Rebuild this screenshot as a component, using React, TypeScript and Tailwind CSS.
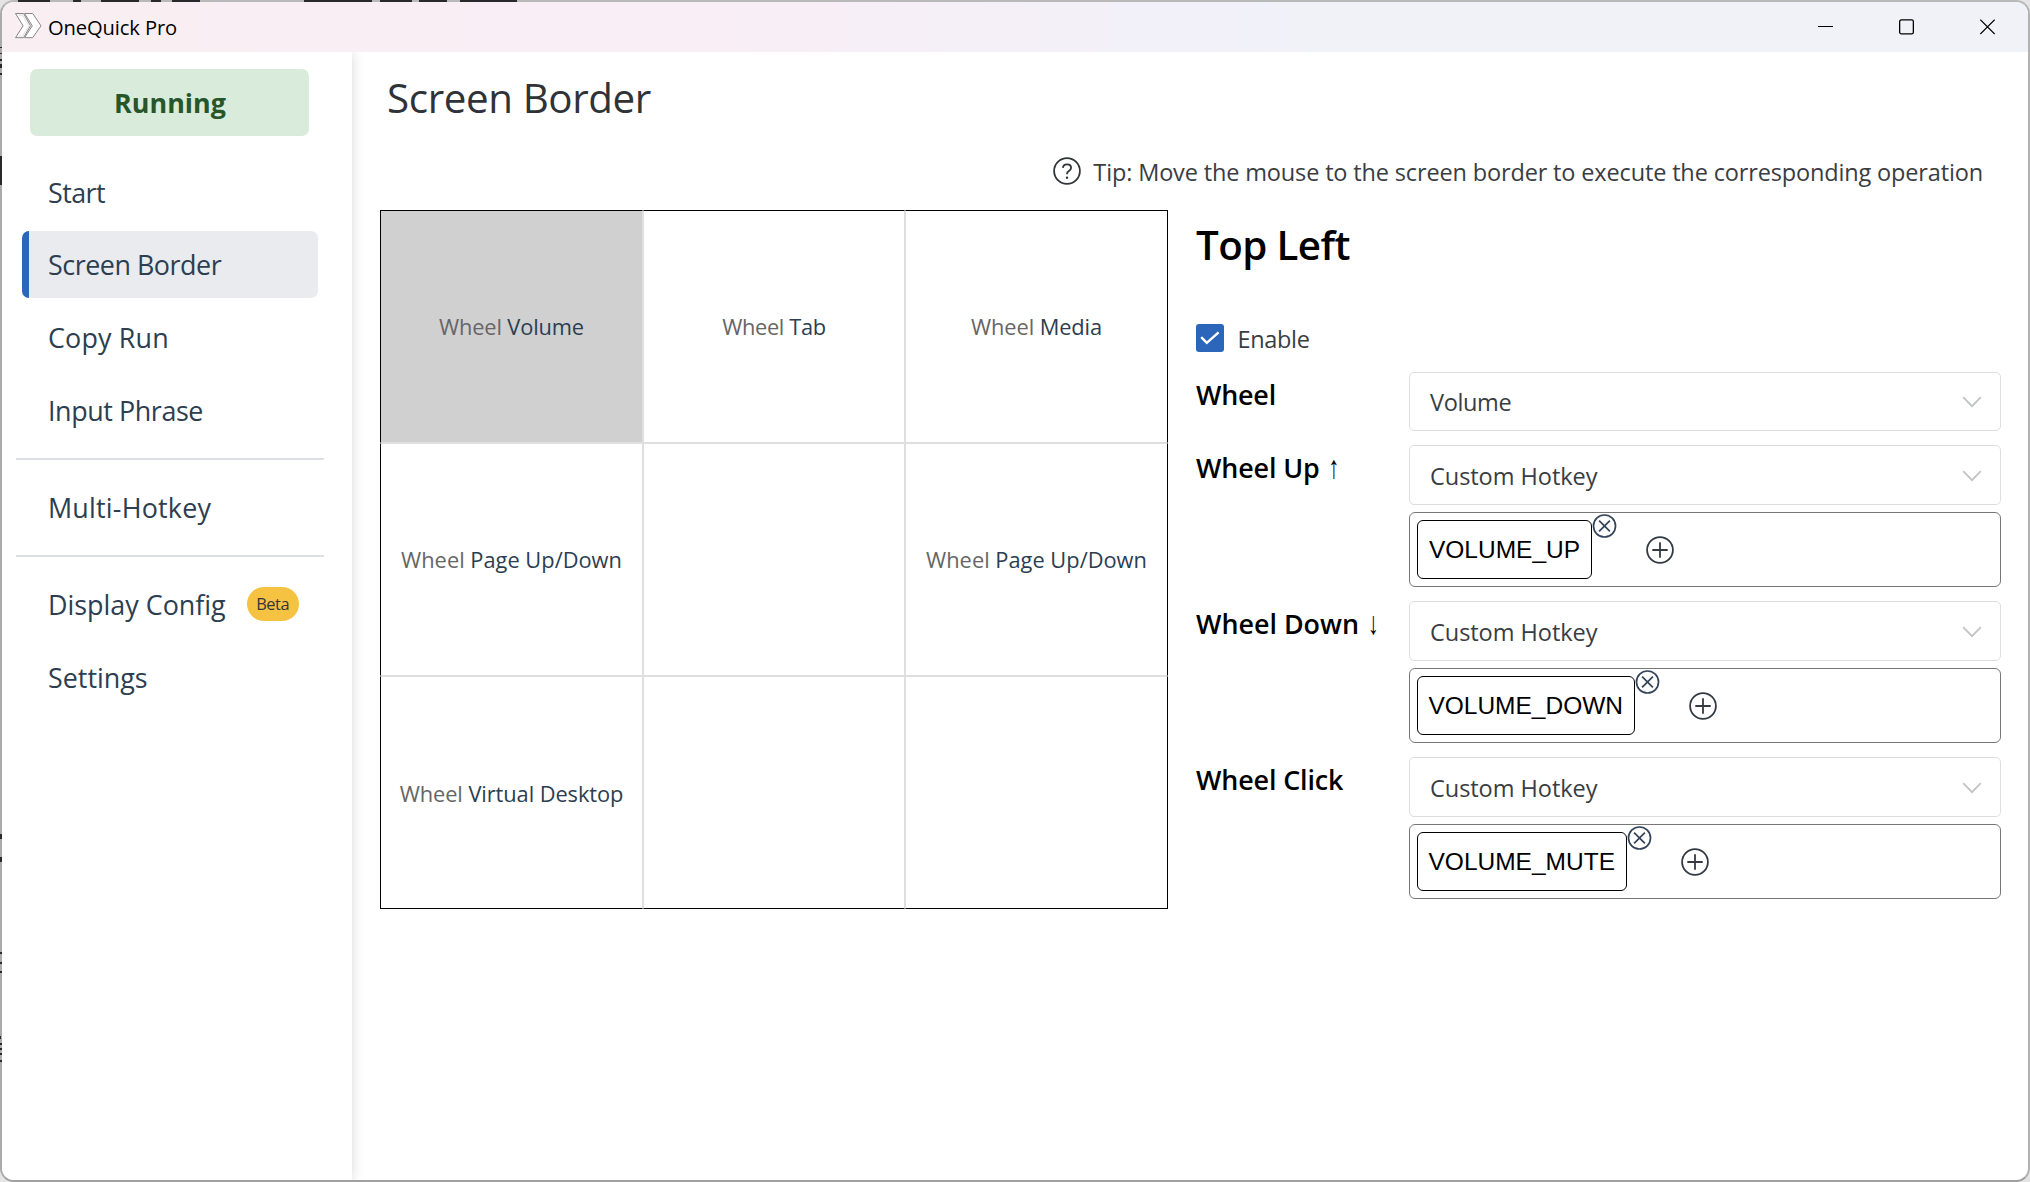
import type { ReactNode } from "react";

function Logo() {
  return (
    <svg width="28" height="28" viewBox="0 0 28 28" fill="#fff" stroke="#8a8588" strokeWidth="1">
      <path d="M1.5 1.5h8l7 12.3-7 11.9h-8l7.6-11.9z" />
      <path d="M10.5 1.5h8.2l8.3 12.3-8.3 11.9h-8.2l7.8-11.9z" />
      <path d="M5 3.2h3.6l6.2 10.6-6.2 10.2H5" fill="none" stroke="#c9c5c7" strokeWidth="0.6" />
    </svg>
  );
}

function TitleBar() {
  return (
    <header className="flex h-[50px] shrink-0 items-center bg-[linear-gradient(90deg,#f9eff2_0%,#f9eef4_22%,#f8eef6_38%,#f2f1f9_58%,#f1f2f8_75%,#f1f2f8_100%)] pl-3 pr-[33px]">
      <div className="-mt-0.5">
        <Logo />
      </div>
      <span className="ml-1.5 text-[20.16px] leading-[50px] tracking-[-0.12px] text-black">OneQuick Pro</span>
      <div className="ml-auto flex items-center gap-[66px]">
        <svg width="15" height="16" viewBox="0 0 15 16" stroke="#000" strokeWidth="1">
          <path d="M0 7.5h15" />
        </svg>
        <svg width="15" height="16" viewBox="0 0 15 16" fill="none" stroke="#000" strokeWidth="1.3">
          <rect x="0.65" y="0.95" width="13.7" height="13.9" rx="1.6" />
        </svg>
        <svg width="15" height="16" viewBox="0 0 15 16" stroke="#000" strokeWidth="1.2">
          <path d="M0.3 0.6l14.4 14.4M14.7 0.6L0.3 15" />
        </svg>
      </div>
    </header>
  );
}

function NavItem({ children, active, tracking }: { children: ReactNode; active?: boolean; tracking: string }) {
  return (
    <div
      className={
        "mx-5 flex h-[67px] items-center overflow-hidden rounded-[7px] text-[26.88px] text-[#2c3e50] " +
        (active ? "bg-[#eaebef] " : "") +
        tracking
      }
    >
      <span className={"mr-[19px] h-full w-[7px] " + (active ? "bg-[#2c66ba]" : "")} />
      {children}
    </div>
  );
}

function Sidebar() {
  return (
    <aside className="z-10 flex w-[350px] shrink-0 flex-col bg-white pt-[17px] shadow-[0_0_12px_rgba(0,0,0,0.16)]">
      <div className="ml-7 h-[67px] w-[279px] rounded-[7px] bg-[#d9ebdb] pl-px text-center text-[26.88px] font-bold leading-[67px] text-[#27562a]">
        Running
      </div>
      <nav className="mt-[22px] flex flex-col gap-1.5 pr-[14px] leading-[66px]">
        <NavItem tracking="pt-0.5 tracking-[-0.56px]">Start</NavItem>
        <NavItem active tracking="tracking-[-0.47px]">Screen Border</NavItem>
        <NavItem tracking="tracking-[0.16px]">Copy Run</NavItem>
        <NavItem tracking="tracking-[-0.41px]">Input Phrase</NavItem>
        <hr className="ml-[14px] mr-[14px] mt-2 mb-2 h-0.5 border-0 bg-[#dcdfe3]" />
        <NavItem tracking="tracking-[0.2px]">Multi-Hotkey</NavItem>
        <hr className="ml-[14px] mr-[14px] mt-2 mb-2 h-0.5 border-0 bg-[#dcdfe3]" />
        <NavItem tracking="tracking-normal">
          Display Config
          <span className="-mt-0.5 ml-[21px] flex h-[34px] w-[52px] items-center justify-center rounded-full bg-[#f5c242] text-[16.4px] leading-[34px] tracking-[-0.4px] text-[#33363a]">
            Beta
          </span>
        </NavItem>
        <NavItem tracking="tracking-normal">Settings</NavItem>
      </nav>
    </aside>
  );
}

const cells: { action?: string; tracking?: string; edge: string }[] = [
  { action: "Volume", tracking: "tracking-[-0.15px]", edge: "border-t-black border-l-black bg-[#d0d0d0]" },
  { action: "Tab", tracking: "tracking-[-0.38px]", edge: "border-t-black" },
  { action: "Media", tracking: "tracking-[-0.1px]", edge: "border-t-black border-r-black" },
  { action: "Page Up/Down", tracking: "tracking-normal", edge: "border-l-black" },
  { edge: "" },
  { action: "Page Up/Down", tracking: "tracking-normal", edge: "border-r-black" },
  { action: "Virtual Desktop", tracking: "pt-0.5 tracking-[-0.08px]", edge: "border-l-black border-b-black" },
  { edge: "border-b-black" },
  { edge: "border-b-black border-r-black" },
];

function BorderGrid() {
  return (
    <div className="grid h-[699px] w-[788px] shrink-0 grid-cols-[263px_262px_263px] grid-rows-3">
      {cells.map((c, i) => (
        <div
          key={i}
          className={
            "flex items-center justify-center whitespace-pre border border-[#dfdfdf] text-[21.84px] leading-[30px] text-[#2c3e50] " +
            c.edge
          }
        >
          {c.action && (
            <div className={c.tracking}>
              <span className="text-[#666]">Wheel </span>
              {c.action}
            </div>
          )}
        </div>
      ))}
    </div>
  );
}

function Select({ value, tall, tracking }: { value: string; tall?: boolean; tracking: string }) {
  return (
    <div
      className={
        "flex items-center justify-between rounded-[5px] border border-[#dcdfe2] pl-5 pr-[18px] text-[23.52px] text-[#3a3d42] " +
        (tall ? "h-[60px] leading-[58px] " : "h-[59px] leading-[57px] ") +
        tracking
      }
    >
      <span className="pt-0.5">{value}</span>
      <svg className="mt-px" width="20" height="12" viewBox="0 0 20 12" fill="none" stroke="#c0c2c5" strokeWidth="1.7">
        <path d="M1.2 1.2L10 10.2l8.8-9" />
      </svg>
    </div>
  );
}

function HotkeyBox({ name, width }: { name: string; width: string }) {
  return (
    <div className="mt-[7px] flex h-[75px] items-center rounded-md border border-[#777] pl-[7px]">
      <div
        className={
          "flex h-[59px] items-center justify-center rounded-md border border-black font-['Liberation_Sans',sans-serif] text-[24.5px] leading-[57px] text-black " +
          width
        }
      >
        {name}
      </div>
      <svg className="-mt-[47px]" width="25" height="24" viewBox="0 0 25 24" fill="none" stroke="#34445a" strokeWidth="1.7">
        <circle cx="12.5" cy="12" r="11" />
        <path d="M7.1 6.6l10.8 10.8M17.9 6.6L7.1 17.4" />
      </svg>
      <svg className="ml-[29px]" width="28" height="28" viewBox="0 0 28 28" fill="none" stroke="#333a44" strokeWidth="1.8">
        <circle cx="14" cy="14" r="12.9" />
        <path d="M14 6.3v15.4M6.3 14h15.4" />
      </svg>
    </div>
  );
}

function Row({
  label,
  arrow,
  tracking,
  children,
}: {
  label: string;
  arrow?: string;
  tracking: string;
  children: ReactNode;
}) {
  return (
    <div className="flex">
      <div className="flex w-[213px] shrink-0 items-start whitespace-pre text-[26.88px] font-semibold leading-[46px] text-black">
        <span className={tracking}>{label}</span>
        {arrow && (
          <span className="ml-[9px] h-[46px] origin-center scale-y-145 font-['Liberation_Sans',sans-serif] text-[22px] font-normal">
            {arrow}
          </span>
        )}
      </div>
      <div className="grow">{children}</div>
    </div>
  );
}

function Panel() {
  return (
    <section className="ml-7 w-[805px]">
      <h2 className="mt-2 text-[40.32px] font-semibold leading-[54px] tracking-[-0.6px] text-black">Top Left</h2>
      <div className="mt-[50px] flex h-[32px] items-center">
        <span className="flex size-7 items-center justify-center rounded-[3px] bg-[#2c66ba]">
          <svg width="20" height="14" viewBox="0 0 20 14" fill="none" stroke="#fff" strokeWidth="2.4">
            <path d="M1.2 6.2l5.6 5.6L18.6 1.4" />
          </svg>
        </span>
        <span className="ml-[13.5px] pt-0.5 text-[23.52px] leading-[32px] tracking-[-0.34px] text-[#3a3d42]">Enable</span>
      </div>
      <div className="mt-[18px] flex flex-col gap-[14px]">
        <Row label="Wheel" tracking="tracking-[-0.2px]">
          <Select value="Volume" tracking="tracking-[-0.36px]" />
        </Row>
        <Row label="Wheel Up" arrow="↑" tracking="tracking-[-0.13px]">
          <Select value="Custom Hotkey" tall tracking="tracking-[-0.05px]" />
          <HotkeyBox name="VOLUME_UP" width="w-[175px]" />
        </Row>
        <Row label="Wheel Down" arrow="↓" tracking="tracking-normal">
          <Select value="Custom Hotkey" tall tracking="tracking-[-0.05px]" />
          <HotkeyBox name="VOLUME_DOWN" width="w-[217.5px]" />
        </Row>
        <Row label="Wheel Click" tracking="tracking-[-0.12px]">
          <Select value="Custom Hotkey" tall tracking="tracking-[-0.05px]" />
          <HotkeyBox name="VOLUME_MUTE" width="w-[209.5px]" />
        </Row>
      </div>
    </section>
  );
}

/* Bits of the desktop that show through around the window's edge: [left, top, width, height]. */
const fragments = [
  [18, 0, 32, 2], [73, 0, 8, 2], [101, 0, 38, 2], [151, 0, 10, 2], [172, 0, 28, 2],
  [304, 0, 68, 2], [380, 0, 32, 2], [419, 0, 28, 2], [460, 0, 57, 2],
  [0, 47, 2, 1], [0, 53, 2, 1], [0, 59, 2, 2], [0, 64, 2, 4], [0, 73, 2, 2], [0, 156, 1.5, 29],
  [0, 834, 2, 5], [0, 857, 2, 5], [0, 952, 2, 2], [0, 962, 2, 2], [0, 971, 2, 2],
  [0, 1036, 1, 3], [0, 1043, 2, 2], [0, 1048, 2, 2], [0, 1053, 2, 2], [0, 1060, 2, 2],
];

export default function App() {
  return (
    <div className="relative h-[1182px] w-[2030px] overflow-hidden bg-[#e4e4e4] font-['Open_Sans','Noto_Sans',sans-serif]">
      <div className="flex h-full w-full flex-col overflow-hidden rounded-[14px] border-2 border-t-[#b9b9b9] border-r-[#b2b2b2] border-b-[#a0a0a0] border-l-[#aaa] bg-white">
        <TitleBar />
        <div className="flex min-h-0 grow overflow-hidden">
          <Sidebar />
          <main className="grow pl-7 pt-[19px]">
            <h1 className="pl-[7px] text-[40.32px] leading-[54px] tracking-[-0.38px] text-[#2f3338]">Screen Border</h1>
            <div className="mr-[45px] mt-[31px] flex h-[32px] items-center justify-end text-[#3a3d42]">
              <svg className="-mt-0.5" width="28" height="28" viewBox="0 0 28 28" fill="none" stroke="#33363a" strokeWidth="1.8">
                <circle cx="14" cy="14" r="12.9" />
                <path d="M9.9 10.9c.2-2.3 1.8-3.6 4.1-3.6s4.1 1.4 4.1 3.4c0 1.6-.9 2.5-2.2 3.3-1.3.8-1.9 1.5-1.9 2.7v.6" />
                <circle cx="14" cy="20.7" r="1.2" fill="#33363a" stroke="none" />
              </svg>
              <span className="ml-3 text-[23.52px] leading-[32px] tracking-[-0.155px]">
                Tip: Move the mouse to the screen border to execute the corresponding operation
              </span>
            </div>
            <div className="mt-[22px] flex">
              <BorderGrid />
              <Panel />
            </div>
          </main>
        </div>
      </div>
      {fragments.map(([left, top, width, height], i) => (
        <span key={i} className="absolute bg-[#2a282a]" style={{ left, top, width, height }} />
      ))}
    </div>
  );
}
